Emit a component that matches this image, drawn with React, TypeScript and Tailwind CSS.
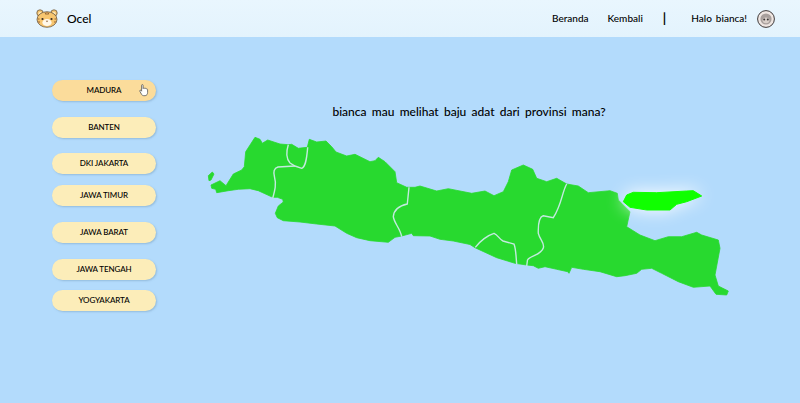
const PROVINCES = [
  { name: "MADURA", className: "mt-0 bg-[#fbdc9b]", hovered: true },
  { name: "BANTEN", className: "mt-4 bg-[#fcedb9]" },
  { name: "DKI JAKARTA", className: "mt-[15px] bg-[#fcedb9]" },
  { name: "JAWA TIMUR", className: "mt-[11px] bg-[#fcedb9]" },
  { name: "JAWA BARAT", className: "mt-4 bg-[#fcedb9]" },
  { name: "JAWA TENGAH", className: "mt-4 bg-[#fcedb9]" },
  { name: "YOGYAKARTA", className: "mt-2.5 bg-[#fcedb9]" },
];

const JAVA =
  "M211 185 L220 180.7 L226 185.7 L233.3 174 L241.7 170 L244.3 166.7 L245.7 151.7 L255 137.3 L260 139.3 L262.3 143.3 L267.7 140 L280 144 L288.3 144.7 L291.7 144.3 L298.3 148.3 L307.3 147.3 L309.3 139.3 L316.7 142 L326 141 L331.7 146.7 L336 152 L346.7 156 L355 154.3 L370 161.7 L375 160.7 L378.3 157.3 L385 161.7 L395 171.7 L396.7 182.7 L406.7 187.3 L415 187.3 L420 186 L436.7 191 L448.3 188.7 L471.7 193.3 L485 191 L494 195.7 L503.3 191.7 L508.3 181.7 L511.7 170 L523.3 165 L532.7 169.3 L536.7 178.3 L546.7 181.7 L556.7 178.3 L566.7 184 L578.3 186 L588.3 192.7 L610 190.7 L617.3 193.3 L618.3 200 L630 211.7 L626.7 226.7 L640 235 L655 240.7 L668.3 236.7 L681.7 236.7 L696.7 232.3 L701.7 235 L718.3 240 L720 248.3 L715 275 L718.3 286 L728.3 291 L726.7 295 L716 294.3 L710 286 L693.3 287.3 L678.3 281.7 L661.7 273.3 L651.7 268.3 L641.7 269.3 L636.7 273.3 L625 275.7 L616.7 276.7 L600 271.7 L583.3 269.3 L571.7 267.3 L569 273.3 L567.7 271.7 L556.7 269.3 L545 266.7 L538.3 268.3 L533.3 265.7 L526.7 265 L515 263.3 L496.7 257.7 L475 247.7 L470 244.5 L453.3 241 L440 239.3 L430 236 L413.3 235.7 L411.7 233.3 L401.7 236 L395 237.3 L388.3 242.3 L370 240.7 L356.7 237.7 L346.7 233.3 L335 226 L316.7 224 L300 222 L283.3 220.7 L277.3 217.7 L275.3 213.3 L278.3 206 L283.3 202 L282.7 199.3 L277.3 197.3 L272.7 197.3 L258.3 190.7 L250 188.7 L238.3 189.3 L228.3 190.7 L216.7 192.7 L215.7 189.3 L211.7 188.3 Z M208.3 175.7 L212.3 172 L214 174 L211 180 L209 180.7 Z";

const MADURA =
  "M623.3 201.7 L626.7 195 L633.3 192.3 L656.7 192.7 L686.7 191 L693.3 190.7 L701.7 196 L686.7 201.7 L676.7 204.3 L670 210 L646.7 210 L630 207.3 Z";

const BORDERS = [
  "M288.3 144.7 C286 152 286.5 159 290 163 L295 166 L301.7 168.3 C305 167 306.5 162 307.7 147.3",
  "M295 166 L278 167 C274 168 273 172 274.5 177 C276.5 184 275 190 272.7 198.3",
  "M409 187.3 L407.3 204 C400 205.5 394 209 393.3 216.7 C394 223 400 228 401.7 236.7",
  "M475.3 247.3 C480 241 488 235 494 233.3 C498 235 499 239 503 241 L514 244 C516 249 516 257 516.7 264",
  "M566.7 184 C562 192 562 204 553.3 217.7 L543.3 215.7 C539 217 538 224 538.3 233.3 C540 240 545 243 543.3 248 C541 255 530 256 527.5 260 L526.7 266",
];

function TigerLogo() {
  return (
    <svg width="22" height="19" viewBox="0 0 22 19" className="shrink-0">
      <circle cx="4" cy="4" r="3.2" fill="#f7c56e" stroke="#6b5a45" strokeWidth="0.8" />
      <circle cx="18" cy="4" r="3.2" fill="#f7c56e" stroke="#6b5a45" strokeWidth="0.8" />
      <circle cx="4" cy="4.3" r="1.5" fill="#fbe6b8" />
      <circle cx="18" cy="4.3" r="1.5" fill="#fbe6b8" />
      <ellipse cx="11" cy="10.5" rx="10" ry="7.8" fill="#f7c56e" stroke="#6b5a45" strokeWidth="0.8" />
      <ellipse cx="11" cy="13.5" rx="4.6" ry="3.6" fill="#fff8ea" />
      <circle cx="6.5" cy="10" r="1.1" fill="#3a2c20" />
      <circle cx="15.5" cy="10" r="1.1" fill="#3a2c20" />
      <path d="M9.8 11.7h2.4L11 13.2z" fill="#8a5a2c" />
      <path d="M9 3.5l1 2.2M13 3.5l-1 2.2M11 3v2.6M1.5 10h2M18.5 10h2M2 13h2M18 13h2" stroke="#8a5a2c" strokeWidth="0.9" fill="none" />
    </svg>
  );
}

function Avatar() {
  return (
    <svg width="18" height="18" viewBox="0 0 18 18" className="shrink-0">
      <circle cx="9" cy="9" r="8.4" fill="#efe6e2" stroke="#3f3a3a" strokeWidth="1" />
      <circle cx="9" cy="9" r="5.6" fill="#a89f9c" />
      <ellipse cx="9" cy="10.3" rx="3.4" ry="2.9" fill="#d9cfc9" />
      <circle cx="7.2" cy="9.6" r="1" fill="#3a3535" />
      <circle cx="10.8" cy="9.6" r="1" fill="#3a3535" />
    </svg>
  );
}

function HandCursor() {
  return (
    <svg width="10" height="13" viewBox="0 0 10 13" className="absolute left-[87px] top-[4px]">
      <path
        d="M2.6 1.3c0-.9 1.5-.9 1.5 0v3.3l.3-.4c.6-.4 1.2-.2 1.3.3.6-.4 1.2-.2 1.4.4.7-.3 1.5.1 1.5.9v2.6c0 1.7-.9 3.3-2.5 3.3H4.7c-1 0-1.6-.5-2.1-1.3L.8 7.2c-.4-.7.5-1.4 1.1-.8l.7.8z"
        fill="#fff"
        stroke="#555"
        strokeWidth="0.8"
      />
    </svg>
  );
}

export default function App() {
  return (
    <div className="min-h-[403px] bg-[#b3dbfc] font-['Lato',sans-serif] text-black">
      <header className="flex h-[37px] items-center justify-between bg-gradient-to-b from-[#e9f6fe] to-[#e3f3fd] pl-9 pr-[25px]">
        <div className="flex items-center gap-[9px]">
          <TigerLogo />
          <span className="text-xs font-medium">Ocel</span>
        </div>
        <nav className="flex items-center text-[10px] font-medium [word-spacing:1.5px]">
          <span>Beranda</span>
          <span className="ml-[19px]">Kembali</span>
          <span className="ml-5 text-[13px] font-bold">|</span>
          <span className="ml-[25px]">Halo bianca!</span>
          <span className="ml-[10px]">
            <Avatar />
          </span>
        </nav>
      </header>

      <main className="flex">
        <aside className="ml-[52px] w-[104px] shrink-0 pt-[43px]">
          {PROVINCES.map((province) => (
            <button
              key={province.name}
              className={`relative flex h-[21px] w-full items-center justify-center rounded-full pb-px text-[8px] font-medium tracking-[-0.1px] shadow-[1px_1px_2px_rgba(90,130,160,0.35)] ${province.className}`}
            >
              {province.name}
              {province.hovered && <HandCursor />}
            </button>
          ))}
        </aside>

        <section className="ml-11 flex w-[540px] flex-col">
          <p className="mt-[67px] h-4 pr-[2px] text-center text-xs leading-4 font-medium [word-spacing:2.2px]">
            bianca mau melihat baju adat dari provinsi mana?
          </p>
          <svg width="540" height="170" viewBox="200 130 540 170" className="mt-[10px] overflow-visible">
            <path d={JAVA} fill="#28d92f" stroke="#28d92f" strokeWidth="0.8" strokeLinejoin="round" />
            {BORDERS.map((d) => (
              <path key={d} d={d} fill="none" stroke="#c3eadf" strokeWidth="1.4" />
            ))}
            <path
              d={MADURA}
              fill="#10ff00"
              stroke="#10ff00"
              strokeWidth="1"
              strokeLinejoin="round"
              className="[filter:drop-shadow(0_0_9px_#ffffff)]"
            />
          </svg>
        </section>
      </main>
    </div>
  );
}
